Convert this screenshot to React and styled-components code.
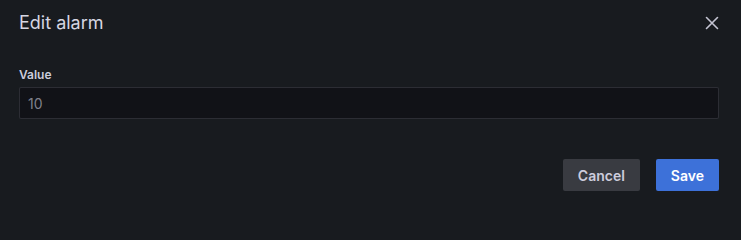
import React from "react";
import styled, { createGlobalStyle } from "styled-components";

const GlobalStyle = createGlobalStyle`
  html, body {
    margin: 0;
    padding: 0;
    background: #181b1f;
  }
  body {
    font-family: Inter, "Noto Sans", sans-serif;
    color: #ccccdc;
  }
`;

const Modal = styled.div`
  width: 741px;
  height: 210px;
  box-sizing: border-box;
  background: #181b1f;
  padding: 12px 22px 19px 19px;
  display: flex;
  flex-direction: column;
`;

const Header = styled.div`
  display: flex;
  align-items: center;
  justify-content: space-between;
  height: 22px;
`;

const Title = styled.h2`
  margin: 0;
  font-size: 18px;
  line-height: 22px;
  font-weight: 400;
  color: #d6d6e2;
`;

const CloseButton = styled.button`
  background: none;
  border: none;
  padding: 0;
  width: 16px;
  height: 16px;
  margin-right: -1px;
  display: flex;
  align-items: center;
  justify-content: center;
  color: #c4c4d2;
  cursor: pointer;
`;

const Field = styled.div`
  margin-top: 33px;
  display: flex;
  flex-direction: column;
`;

const Label = styled.label`
  font-size: 12px;
  line-height: 15px;
  font-weight: 600;
  color: #ccccdc;
  padding-bottom: 5px;
`;

const Input = styled.input`
  box-sizing: border-box;
  width: 100%;
  height: 32px;
  background: #111217;
  border: 1px solid rgba(204, 204, 220, 0.15);
  border-radius: 2px;
  padding: 0 8px;
  font-family: Inter, "Noto Sans", sans-serif;
  font-size: 14px;
  color: rgba(204, 204, 220, 0.6);
  outline: none;
`;

const Footer = styled.div`
  margin-top: auto;
  display: flex;
  justify-content: flex-end;
  gap: 16px;
`;

const Button = styled.button`
  height: 32px;
  padding: 0 15px;
  border: none;
  border-radius: 2px;
  font-family: Inter, "Noto Sans", sans-serif;
  font-size: 14px;
  font-weight: 600;
  background: ${({ $primary }) => ($primary ? "#3d71d9" : "#393b41")};
  color: ${({ $primary }) => ($primary ? "#ffffff" : "#ccccdc")};
  cursor: pointer;
`;

export default function App() {
  return (
    <>
      <GlobalStyle />
      <Modal>
        <Header>
          <Title>Edit alarm</Title>
          <CloseButton aria-label="Close">
            <svg width="14" height="14" viewBox="0 0 14 14">
              <path
                d="M1.5 1.5 L12.5 12.5 M12.5 1.5 L1.5 12.5"
                stroke="currentColor"
                strokeWidth="1.6"
                strokeLinecap="round"
              />
            </svg>
          </CloseButton>
        </Header>
        <Field>
          <Label>Value</Label>
          <Input defaultValue="10" />
        </Field>
        <Footer>
          <Button>Cancel</Button>
          <Button $primary>Save</Button>
        </Footer>
      </Modal>
    </>
  );
}
